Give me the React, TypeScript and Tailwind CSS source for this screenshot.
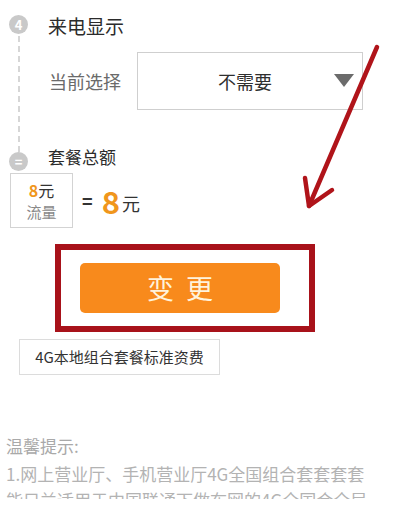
import React from "react";

const font = { fontFamily: '"Noto Sans CJK SC", "Noto Sans", sans-serif' };

function StepDot({ children }: { children: React.ReactNode }) {
  return (
    <div className="w-[19px] h-[19px] rounded-full bg-[#c9c9c9] text-white text-[13px] leading-none flex items-center justify-center font-bold">
      {children}
    </div>
  );
}

export default function App() {
  return (
    <div className="relative w-[393px] h-[508px] overflow-hidden bg-white" style={font}>
      {/* step 4 + step = with dashed timeline */}
      <div className="flex pt-[15px]">
        <div className="w-[37px] flex flex-col items-center">
          <StepDot>4</StepDot>
          <div className="h-[116px] border-l-2 border-dashed border-[#d6d6d6] mt-[2px]" />
          <StepDot>=</StepDot>
        </div>
        <div className="flex-1 pl-[11px]">
          <div className="text-[19px] leading-[22px] text-[#2b2b2b]">来电显示</div>
          <div className="flex items-center mt-[15px]">
            <div className="text-[18px] text-[#6a6a6a] w-[89px] pl-[1px]">当前选择</div>
            <div className="relative w-[226px] h-[58px] border border-[#cfcfcf] flex items-center justify-center">
              <span className="text-[18px] text-[#2e2e2e] -ml-[10px]">不需要</span>
              <div className="absolute right-[8px] top-[21px] w-0 h-0 border-l-[10px] border-r-[10px] border-t-[13px] border-l-transparent border-r-transparent border-t-[#6b6b6b]" />
            </div>
          </div>
          <div className="text-[17px] leading-[20px] text-[#2b2b2b] mt-[37px]">套餐总额</div>
        </div>
      </div>

      {/* total */}
      <div className="flex items-center pl-[10px] mt-[2px]">
        <div className="w-[63px] h-[55px] border border-[#d3d3d3] flex flex-col items-center justify-center leading-[22px]">
          <div className="text-[16px]">
            <span className="text-[#f0961c] font-bold">8</span>
            <span className="text-[#333]">元</span>
          </div>
          <div className="text-[15px] text-[#8a8a8a]">流量</div>
        </div>
        <span className="ml-[9px] text-[18px] font-bold text-[#333]">=</span>
        <span className="ml-[9px] text-[31px] font-bold text-[#f0961c] leading-none">8</span>
        <span className="ml-[2px] mt-[6px] text-[18px] text-[#333]">元</span>
      </div>

      {/* change button with highlight */}
      <div className="ml-[55px] mt-[16px] w-[260px] h-[88px] border-[6px] border-[#a8121a] flex items-center justify-center">
        <div className="-ml-[10px] w-[200px] h-[50px] rounded-[5px] bg-[#f88a1c] flex items-center justify-center text-[27px] tracking-[12px] pl-[12px] text-[#fff3dc]">
          变更
        </div>
      </div>

      <div className="ml-[19px] mt-[7px] w-[201px] h-[36px] border border-[#dcdcdc] flex items-center justify-center text-[15px] text-[#333]">
        4G本地组合套餐标准资费
      </div>

      {/* tips */}
      <div className="pl-[6px] mt-[59px] text-[#a9a9a9]">
        <div className="text-[17px] leading-[24px]">温馨提示:</div>
        <div className="h-[40px] overflow-hidden text-[17px] leading-[26px] text-[#b3b3b3] mt-[3px]">
          <div>1.网上营业厅、手机营业厅4G全国组合套套套套</div>
          <div className="h-[12px] overflow-hidden">能只兰适用于中国联通下做布网的4G全国合全局</div>
        </div>
      </div>

      {/* red annotation arrow */}
      <svg className="absolute left-0 top-0 pointer-events-none" width="393" height="508" viewBox="0 0 393 508">
        <g stroke="#b0141a" strokeWidth="4.5" strokeLinecap="round" strokeLinejoin="round" fill="none">
          <line x1="377" y1="47" x2="309" y2="206" />
          <polyline points="305,178 309,206 332,190" />
        </g>
      </svg>
    </div>
  );
}
